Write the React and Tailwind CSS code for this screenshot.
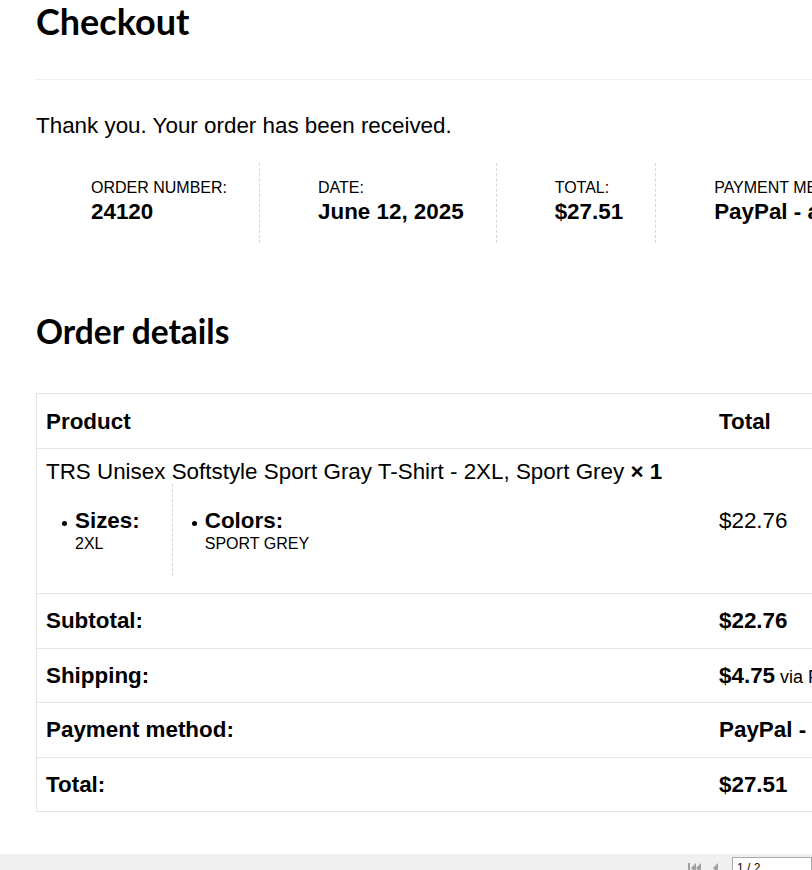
import React from 'react';

const overview = [
  { label: 'Order number:', value: '24120' },
  { label: 'Date:', value: 'June 12, 2025' },
  { label: 'Total:', value: '$27.51' },
  { label: 'Payment method:', value: 'PayPal - and Credit Cards' },
];

const meta = [
  { key: 'Sizes:', value: '2XL' },
  { key: 'Colors:', value: 'Sport Grey' },
];

const totals = [
  { label: 'Subtotal:', value: <strong>$22.76</strong> },
  {
    label: 'Shipping:',
    value: (
      <>
        <strong>$4.75</strong>
        <span className="text-[18px] font-normal leading-none">&nbsp;via Flat rate</span>
      </>
    ),
  },
  { label: 'Payment method:', value: <strong>PayPal - and Credit Cards</strong> },
  { label: 'Total:', value: <strong>$27.51</strong> },
];

const Row = ({ label, children, first }) => (
  <div className={`flex ${first ? 'h-[54px] pt-[2px]' : 'h-[54.5px] border-t border-[#e6e6e6] pt-[1px]'}`}>
    <div className="flex w-[672px] shrink-0 items-center px-[9px] font-bold">{label}</div>
    <div className="flex flex-1 items-center whitespace-nowrap px-[10px]">
      <div>{children}</div>
    </div>
  </div>
);

const App = () => {
  return (
    <div className="h-[870px] w-[812px] overflow-hidden bg-white text-black font-['Liberation_Sans',Arial,sans-serif] text-[22.4px] leading-[24px]">
      <div className="w-[960px] pl-[36px]">
        <h1 className="font-['Lato',sans-serif] text-[36px] font-bold leading-[43px]">Checkout</h1>
        <div className="mt-[36px] h-px bg-[#efefef]" />

        <p className="mt-[31px] leading-[30px]">Thank you. Your order has been received.</p>

        <ul className="mt-[22px] flex pl-[55px]">
          {overview.map((item, i) => (
            <li
              key={item.label}
              className={`whitespace-nowrap pt-[15px] pb-[19px] pr-[32px] ${i === 0 ? '' : 'pl-[58px]'} ${
                i < overview.length - 1 ? 'border-r border-dashed border-[#d6d6d6]' : ''
              }`}
            >
              <div className="text-[16px] uppercase leading-[20px]">{item.label}</div>
              <div className="mt-[2px] font-bold">{item.value}</div>
            </li>
          ))}
        </ul>

        <h2 className="mt-[69px] font-['Lato',sans-serif] text-[33.5px] font-bold leading-[38px]">Order details</h2>

        <div className="mt-[43px] border border-[#e6e6e6]">
          <Row label="Product" first>
            <strong>Total</strong>
          </Row>
          <div className="flex border-t border-[#e6e6e6]">
            <div className="w-[672px] shrink-0 px-[9px] pt-[11px] pb-[17px]">
              <div>
                TRS Unisex Softstyle Sport Gray T-Shirt - 2XL, Sport Grey <strong>× 1</strong>
              </div>
              <ul className="flex pl-[16px]">
                {meta.map((m, i) => (
                  <li
                    key={m.key}
                    className={`flex pt-[25px] pb-[22px] ${
                      i === 0 ? 'pr-[32px] border-r border-dashed border-[#d6d6d6]' : 'pl-[19px]'
                    }`}
                  >
                    <span className="mr-[8px] mt-[12px] h-[5px] w-[5px] rounded-full bg-black" />
                    <div>
                      <div className="font-bold">{m.key}</div>
                      <div className="mt-[1px] text-[16px] uppercase leading-[20px]">{m.value}</div>
                    </div>
                  </li>
                ))}
              </ul>
            </div>
            <div className="flex flex-1 items-center px-[10px]">$22.76</div>
          </div>
          {totals.map((t) => (
            <Row key={t.label} label={t.label}>
              {t.value}
            </Row>
          ))}
        </div>
      </div>

      <div className="mt-[42px] flex h-[30px] w-full items-start justify-end bg-[#f0f0f0] pt-[3px]">
        <div className="mr-[12px] flex items-center gap-[8px] pt-[5px]">
          <svg width="14" height="12" viewBox="0 0 14 12" className="fill-[#a0a0a0]">
            <rect x="0" y="1" width="2" height="10" />
            <polygon points="8,1 3,6 8,11" />
            <polygon points="13,1 8,6 13,11" />
          </svg>
          <svg width="10" height="12" viewBox="0 0 10 12" className="fill-[#a0a0a0]">
            <polygon points="8,1 3,6 8,11" />
          </svg>
        </div>
        <div className="h-[22px] w-[80px] border border-[#a9a9a9] bg-white px-[4px] text-[12px] leading-[20px]">
          1 / 2
        </div>
      </div>
    </div>
  );
};

export default App;
